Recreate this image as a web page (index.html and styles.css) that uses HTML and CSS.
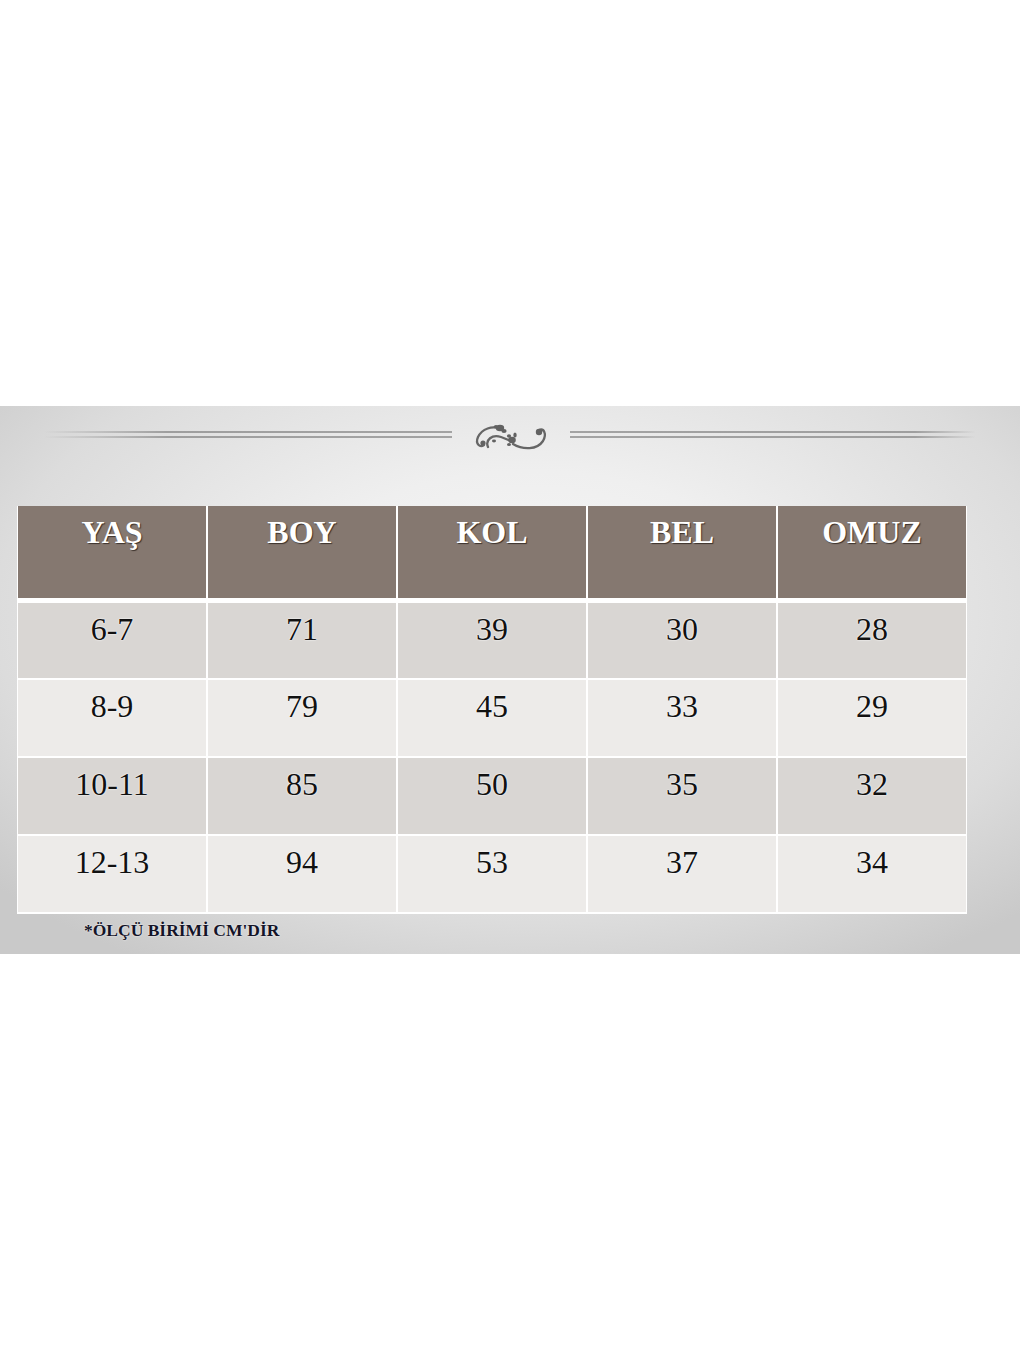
FILE: index.html
```html
<!DOCTYPE html>
<html lang="tr">
<head>
<meta charset="utf-8">
<title>Beden Tablosu</title>
<link rel="stylesheet" href="styles.css">
</head>
<body>
<div class="spacer-top"></div>
<section class="panel">
  <div class="ornament-row">
    <div class="rule rule-left"></div>
    <svg class="ornament" viewBox="0 0 76 30" width="76" height="30" aria-hidden="true">
      <g fill="none" stroke="#666666" stroke-width="2.3" stroke-linecap="round">
        <path d="M28 7 C19 3 9 7 5 15 C2 22 7 26 11 23"/>
        <path d="M15 25 C12 18 19 12 28 15 C34 17 37 19 40 20"/>
        <path d="M40 22 C50 28 64 28 70 19 C74 12 71 6 66 8"/>
      </g>
      <g fill="#626262">
        <circle cx="10" cy="21" r="2.6"/>
        <circle cx="66" cy="10" r="3.2"/>
        <ellipse cx="27" cy="6" rx="4.2" ry="3.2"/>
        <ellipse cx="31" cy="9" rx="2.6" ry="2.1"/>
        <ellipse cx="23" cy="4.5" rx="2.2" ry="1.6"/>
        <ellipse cx="39" cy="18" rx="3.8" ry="3.2"/>
        <ellipse cx="36" cy="14" rx="2.1" ry="1.7"/>
        <ellipse cx="42" cy="13" rx="1.7" ry="2.5"/>
        <ellipse cx="36" cy="22.5" rx="2" ry="1.6"/>
        <ellipse cx="21" cy="19" rx="2" ry="1.4"/>
      </g>
    </svg>
    <div class="rule rule-right"></div>
  </div>

  <div class="size-table">
    <div class="cell head">YAŞ</div>
    <div class="cell head">BOY</div>
    <div class="cell head">KOL</div>
    <div class="cell head">BEL</div>
    <div class="cell head">OMUZ</div>

    <div class="cell odd">6-7</div>
    <div class="cell odd">71</div>
    <div class="cell odd">39</div>
    <div class="cell odd">30</div>
    <div class="cell odd">28</div>

    <div class="cell even">8-9</div>
    <div class="cell even">79</div>
    <div class="cell even">45</div>
    <div class="cell even">33</div>
    <div class="cell even">29</div>

    <div class="cell odd">10-11</div>
    <div class="cell odd">85</div>
    <div class="cell odd">50</div>
    <div class="cell odd">35</div>
    <div class="cell odd">32</div>

    <div class="cell even">12-13</div>
    <div class="cell even">94</div>
    <div class="cell even">53</div>
    <div class="cell even">37</div>
    <div class="cell even">34</div>
  </div>

  <p class="note">*ÖLÇÜ BİRİMİ CM'DİR</p>
</section>
</body>
</html>
```

FILE: styles.css
```css
html, body {
  margin: 0;
  padding: 0;
  background: #ffffff;
}

.spacer-top {
  height: 406px;
}

.panel {
  height: 548px;
  box-sizing: border-box;
  padding-top: 16px;
  background:
    radial-gradient(ellipse 70% 75% at 52% 38%, #f7f7f7 0%, #efefef 35%, #dcdcdc 75%, #c9c9c9 100%);
  font-family: "Liberation Serif", "Times New Roman", serif;
}

.ornament-row {
  display: flex;
  align-items: center;
  height: 30px;
  padding-left: 45px;
  gap: 21px;
}

.rule {
  height: 7px;
  box-sizing: border-box;
  border-top: 2px solid #a9a9a9;
  border-bottom: 2px solid #a9a9a9;
  margin-top: -5px;
}

.rule-left {
  width: 407px;
  border-image: linear-gradient(to right, rgba(150,150,150,0) 0%, #9e9e9e 30%, #a3a3a3 100%) 1;
  border-left: 0;
  border-right: 0;
}

.rule-right {
  width: 405px;
  border-image: linear-gradient(to right, #a3a3a3 0%, #9e9e9e 85%, rgba(150,150,150,0) 100%) 1;
  border-left: 0;
  border-right: 0;
}

.ornament {
  display: block;
  flex: none;
}

.size-table {
  margin: 54px 0 0 17px;
  width: 950px;
  box-sizing: border-box;
  display: grid;
  grid-template-columns: repeat(5, 1fr);
  grid-template-rows: 95px 75px 76px 76px 76px;
  gap: 2px;
  padding: 0 1px 2px 1px;
  background: #ffffff;
}

.cell {
  box-sizing: border-box;
  padding-top: 8px;
  text-align: center;
  font-size: 32px;
  line-height: 36px;
  color: #111111;
  text-shadow: 0 0 2px #ffffff, 0 0 1px #ffffff;
}

.head {
  background: #857870;
  color: #ffffff;
  font-weight: bold;
  border-bottom: 3px solid #ffffff;
  text-shadow: 1px 1px 1px #3b312b;
}

.odd {
  background: #d9d6d3;
}

.even {
  background: #edebe9;
}

.note {
  margin: 5px 0 0 84px;
  font-size: 17.5px;
  line-height: 22px;
  font-weight: bold;
  color: #141428;
  text-shadow: 0 0 2px #ffffff;
}
```
